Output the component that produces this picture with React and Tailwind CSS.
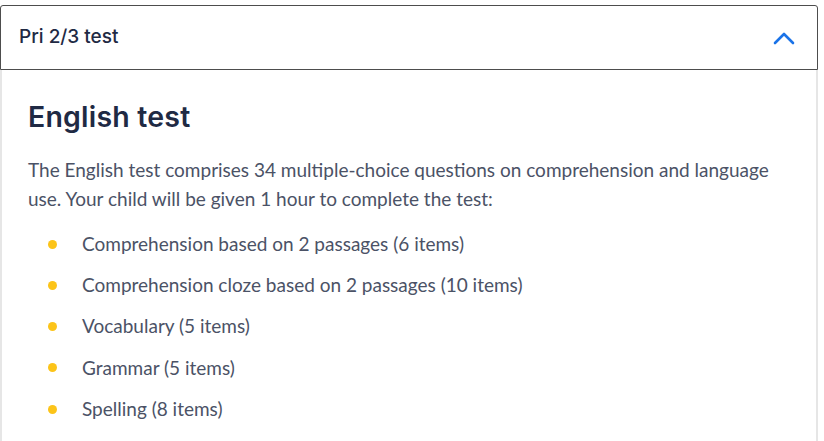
import React from "react";

const items = [
  "Comprehension based on 2 passages (6 items)",
  "Comprehension cloze based on 2 passages (10 items)",
  "Vocabulary (5 items)",
  "Grammar (5 items)",
  "Spelling (8 items)",
];

export default function App() {
  return (
    <div className="w-[824px] h-[441px] overflow-hidden bg-white pt-[5px]">
      <div className="w-[818px]">
        <div className="h-[65px] flex items-center justify-between border border-[#4d4d4d] rounded-t-[3px] pl-[18px] pr-[22px]">
          <span className="text-[19px] font-medium text-[#1f2a44] font-['Inter',sans-serif] tracking-[0px]">
            Pri 2/3 test
          </span>
          <svg width="22" height="14" viewBox="0 0 22 14" fill="none">
            <path d="M2 12 L11 3 L20 12" stroke="#1a73e8" strokeWidth="2.6" strokeLinecap="round" strokeLinejoin="round" />
          </svg>
        </div>
        <div className="border-x-2 border-[#e6e6e6] px-[26px] pt-[30px] pb-6">
          <h2 className="text-[28.5px] leading-[34px] font-semibold text-[#1f2a44] font-['Inter',sans-serif] tracking-[0.2px]">
            English test
          </h2>
          <p className="mt-[21px] text-[19px] leading-[29px] text-[#4b5266] font-['Lato',sans-serif]">
            The English test comprises 34 multiple-choice questions on comprehension and language use. Your child will be given 1 hour to complete the test:
          </p>
          <ul className="mt-[19px] flex flex-col gap-[17.3px]">
            {items.map((t) => (
              <li key={t} className="flex items-center h-[24px] text-[19px] text-[#4b5266] font-['Lato',sans-serif]">
                <span className="ml-[20px] w-[9px] h-[9px] rounded-full bg-[#fcc419] shrink-0" />
                <span className="ml-[25px]">{t}</span>
              </li>
            ))}
          </ul>
        </div>
      </div>
    </div>
  );
}
